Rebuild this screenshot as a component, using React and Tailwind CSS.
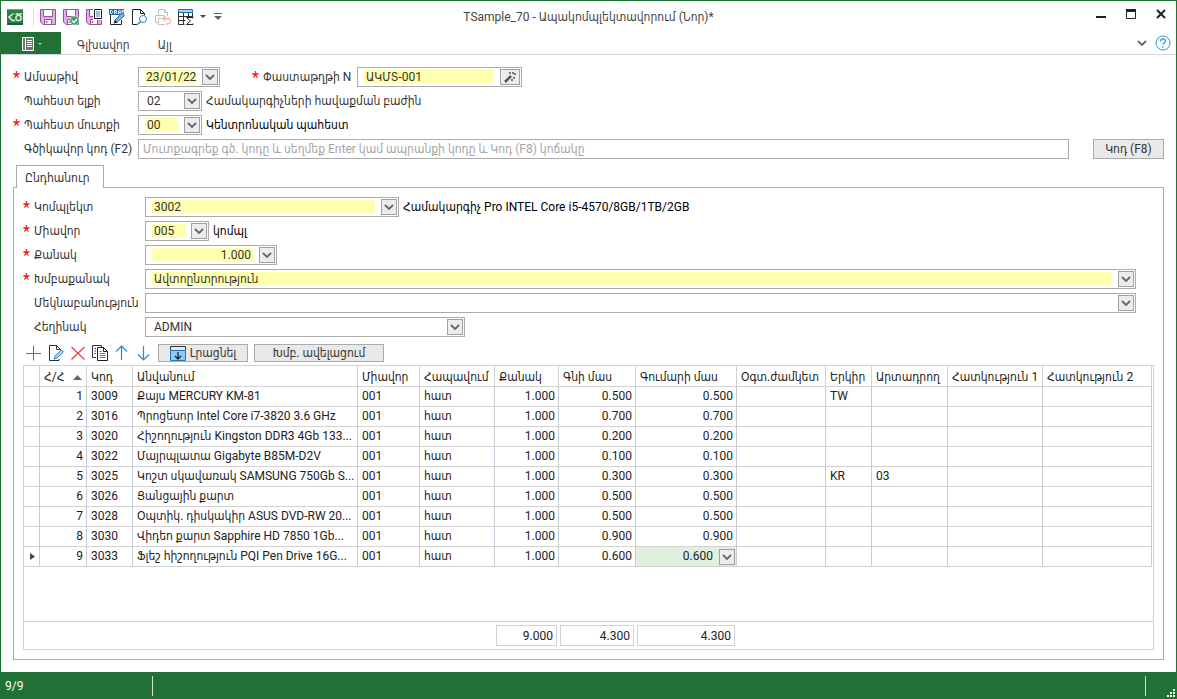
import React from 'react';

const columns = [
  { label: '', width: 'w-[16px]' },
  { label: 'Հ/Հ', width: 'w-[47px]', right: true, sorted: true },
  { label: 'Կոդ', width: 'w-[46px]' },
  { label: 'Անվանում', width: 'w-[225px]' },
  { label: 'Միավոր', width: 'w-[62px]' },
  { label: 'Հապավում', width: 'w-[75px]' },
  { label: 'Քանակ', width: 'w-[64px]', right: true, total: '9.000' },
  { label: 'Գնի մաս', width: 'w-[77px]', right: true, total: '4.300' },
  { label: 'Գումարի մաս', width: 'w-[101px]', right: true, total: '4.300' },
  { label: 'Օգտ.ժամկետ', width: 'w-[89px]' },
  { label: 'Երկիր', width: 'w-[46px]' },
  { label: 'Արտադրող', width: 'w-[76px]' },
  { label: 'Հատկություն 1', width: 'w-[95px]' },
  { label: 'Հատկություն 2', width: 'w-auto' },
];

const items = [
  ['3009', 'Քայս MERCURY KM-81', '0.500', 'TW', ''],
  ['3016', 'Պրոցեսոր Intel Core i7-3820 3.6 GHz', '0.700', '', ''],
  ['3020', 'Հիշողություն Kingston DDR3 4Gb 133...', '0.200', '', ''],
  ['3022', 'Մայրպլատա Gigabyte B85M-D2V', '0.100', '', ''],
  ['3025', 'Կոշտ սկավառակ SAMSUNG 750Gb S...', '0.300', 'KR', '03'],
  ['3026', 'Ցանցային քարտ', '0.500', '', ''],
  ['3028', 'Օպտիկ. դիսկակիր ASUS DVD-RW 20...', '0.500', '', ''],
  ['3030', 'Վիդեո քարտ Sapphire HD 7850 1Gb...', '0.900', '', ''],
  ['3033', 'Ֆլեշ հիշողություն PQI Pen Drive 16G...', '0.600', '', ''],
];

const rows = items.map(([code, name, part, country, maker], i) => [
  '', i + 1, code, name, '001', 'հատ', '1.000', part, part, '', country, maker, '', '',
]);

const Chevron = () => (
  <svg width="10" height="8" viewBox="0 0 10 8" fill="none" stroke="#666" strokeWidth="1.8">
    <path d="M1 2l4 4 4-4" />
  </svg>
);

const ArrowBox = () => (
  <span className="pointer-events-none flex h-4 w-4 shrink-0 items-center justify-center border border-[#a0a0a0] bg-[#ececec]">
    <Chevron />
  </span>
);

const Label = ({ htmlFor, required, className, children }) => (
  <label htmlFor={htmlFor} className={`flex shrink-0 items-center whitespace-nowrap ${className}`}>
    <span className="w-[11px] shrink-0 pt-0.5 text-base leading-4 text-[#ff0000]">{required ? '*' : ''}</span>
    {children}
  </label>
);

const boxClass = 'flex h-5 items-center gap-1.5 border border-[#ababab] bg-white pl-1.5 pr-px';

const Combo = ({ id, value, required, className }) => (
  <div className={`${boxClass} ${className}`}>
    <select
      id={id}
      defaultValue={value}
      className={`h-3.5 min-w-0 flex-1 appearance-none pl-0.5 leading-[14px] outline-none ${required ? 'bg-[#ffffb0]' : ''}`}
    >
      <option>{value}</option>
    </select>
    <ArrowBox />
  </div>
);

const Edit = ({ id, value, className, inputClass, children }) => (
  <div className={`${boxClass} ${className}`}>
    <input
      id={id}
      defaultValue={value}
      className={`h-3.5 min-w-0 flex-1 bg-[#ffffb0] outline-none ${inputClass}`}
    />
    {children}
  </div>
);

const PickButton = ({ label }) => (
  <button aria-label={label} className="flex h-4 w-4 shrink-0 items-center justify-center border border-[#a0a0a0] bg-[#ececec]">
    <Chevron />
  </button>
);

const Floppy = () => (
  <g fill="#dfb0df" stroke="#97509a">
    <path d="M.5.5h15v15H3L.5 13z" />
    <path d="M3.5.5h9v7h-9z" fill="#fff" />
    <path d="M4.5 10.5h7v5h-7z" fill="#fff" />
    <path d="M6.5 12v2" strokeWidth="1.5" />
  </g>
);

const Icon = ({ children }) => (
  <svg width="16" height="16" viewBox="0 0 16 16" fill="none">
    {children}
  </svg>
);

const quickActions = [
  { label: 'Գրանցել', icon: <Floppy /> },
  {
    label: 'Գրանցել և հաստատել',
    icon: (
      <>
        <Floppy />
        <circle cx="11.5" cy="11.5" r="4.7" fill="#3fa765" stroke="#fff" strokeWidth=".6" />
        <path d="M9 11.5l2 2 3-3.5" stroke="#fff" strokeWidth="1.3" />
      </>
    ),
  },
  {
    label: 'Գրանցել և փակել',
    icon: (
      <>
        <Floppy />
        <path d="M7 0h9v11H7z" fill="#fff" />
        <path d="M8.5.5h7v9h-7z" stroke="#222" fill="#fff" />
        <path d="M10 3h4M10 5h4M10 7h4" stroke="#2b87d1" />
      </>
    ),
  },
  {
    label: 'Սևագիր',
    icon: (
      <>
        <path d="M1.5 6v9.5h11V11M13 6v2" stroke="#222" />
        <path d="M0 0h15v6H0z" fill="#2b6cab" />
        <path d="M1.5 1.5v3h1l1-1v-1l-1-1zM5.5 5V1.5h2V3h-2m1.2 0L8 5M9.5 5V2l.7-.6h1V5M9.5 3.5h2M13 5V1.5h2M13 3h2" stroke="#fff" strokeWidth=".8" />
        <path d="M5 14l1-3 7-7 2.500 2.500-7 6.500z" fill="#79b4e3" stroke="#2b6cab" />
        <path d="M5 14.500l3.500-1L6 11z" fill="#222" />
      </>
    ),
  },
  {
    label: 'Դիտել',
    icon: (
      <>
        <path d="M5 15.500H.5V.5h8l4 4v2M8.500.5v4h4" stroke="#222" />
        <circle cx="11" cy="10" r="3.500" stroke="#2b87d1" fill="#fff" />
        <path d="M8.500 12.500l-3 3" stroke="#2b87d1" strokeWidth="1.5" />
      </>
    ),
  },
  {
    label: 'Չեղարկել',
    icon: (
      <>
        <path d="M3.500 6V.5h6l3 3V7M9.500.5v3h3M.5 6.500h9M.5 6.500v7H3M3 9.500h4M3.500 10v5.500h6" stroke="#bdbdbd" />
        <path d="M10.500 7L8 9.500l2.500 2.500M8 9.500h4.500q3 0 3 2.700t-3 2.800H11" stroke="#efb4ae" strokeWidth="1.3" />
      </>
    ),
  },
  {
    label: 'Հաշվարկ',
    icon: (
      <>
        <path d="M.5.5h14v3H.5z" fill="#a9d4f5" stroke="#1f6cab" />
        <path d="M.5 3.500v12h6M.5 7.500h14M.5 11.500h7M5.500 4v11.500M10.500 4v3.500M14.500 4v4" stroke="#333" />
        <path d="M15 9.500v-1H8.500l4 3.500-4 3.500H15v-1" stroke="#222" fill="#fff" />
      </>
    ),
  },
];

const gridActions = [
  { label: 'Ավելացնել', icon: <path d="M7.5 .5v15M0 8.5h15" stroke="#1d9a4c" /> },
  {
    label: 'Խմբագրել',
    icon: (
      <>
        <path d="M11 14v1.500H1.500V.5h7l4 4v1M8.500.5v4h4" stroke="#333" />
        <path d="M6 14l1-3 6.500-6 2 2L9 13z" fill="#a9d4f5" stroke="#2b87d1" />
      </>
    ),
  },
  { label: 'Հեռացնել', icon: <path d="M1.500 2l13 12.500M14.500 2l-13 12.500" stroke="#e2453c" strokeWidth="1.3" /> },
  {
    label: 'Պատճենել',
    icon: (
      <>
        <path d="M4 12.500H.5V.5h9V2M2.500 3.500H4M2.500 6H4M2.500 8.500H4" stroke="#333" />
        <path d="M5.500 2.500h6l4 4v9h-10zM11.500 2.500v4h4" fill="#fff" stroke="#222" />
        <path d="M7.500 6.500h2M7.500 8.500h6M7.500 10.500h6M7.500 12.500h6" stroke="#2b87d1" />
      </>
    ),
  },
  { label: 'Վերև', icon: <path d="M7.5 15V1M2 6.500L7.5 1 13 6.500" stroke="#2b87d1" strokeWidth="1.2" /> },
  { label: 'Ներքև', icon: <path d="M7.5 1v14M2 9.500L7.5 15 13 9.500" stroke="#2b87d1" strokeWidth="1.2" /> },
];

const TitleBar = () => (
  <header className="grid h-[31px] grid-cols-[1fr_auto_1fr] items-center">
    <div className="flex items-center pl-1.5">
      <svg width="16" height="16" viewBox="0 0 16 16" fill="none">
        <rect width="16" height="16" rx="1" fill="#2c8045" />
        <path d="M0 .5h16" stroke="#62ad72" />
        <path d="M0 14h16v2H0z" fill="#1c6130" />
        <path d="M6.500 4.500L2 8l3.500 3.500H8" stroke="#e6f3e8" strokeWidth="1.5" />
        <circle cx="11.500" cy="9" r="2.600" stroke="#e6f3e8" strokeWidth="1.4" />
        <path d="M8.500 5H15" stroke="#e6f3e8" strokeWidth="1.4" />
      </svg>
      <span className="ml-2.5 mr-1.5 h-5 w-px bg-[#dcdcdc]" />
      <div className="flex gap-[7px]">
        {quickActions.map((action) => (
          <button key={action.label} aria-label={action.label}>
            <Icon>{action.icon}</Icon>
          </button>
        ))}
      </div>
      <svg className="ml-1.5" width="6" height="4" viewBox="0 0 6 4"><path d="M0 0h6L3 3z" fill="#444" /></svg>
      <svg className="ml-2" width="8" height="7" viewBox="0 0 8 7"><path d="M0 0h8v1H0zM0 3h8L4 7z" fill="#666" /></svg>
    </div>
    <h1 className="whitespace-nowrap text-[#444]">TSample_70 - Ապակոմպլեկտավորում (Նոր)*</h1>
    <div className="flex items-center justify-end gap-5 pb-1.5 pr-2.5">
      <button aria-label="Minimize">
        <svg width="10" height="12"><path d="M0 8h10v2H0z" fill="#222" /></svg>
      </button>
      <button aria-label="Maximize">
        <svg width="10" height="10" fill="none"><path d="M.5.5h9v9h-9z" stroke="#222" /><path d="M0 0h10v3H0z" fill="#222" /></svg>
      </button>
      <button aria-label="Close">
        <svg width="10" height="10"><path d="M1 1l8 8M9 1L1 9" stroke="#222" strokeWidth="2" /></svg>
      </button>
    </div>
  </header>
);

const Ribbon = () => (
  <nav className="flex h-[23px] items-center border-b border-[#d5d5d5] text-[#444]">
    <button aria-label="Ֆայլ" className="flex h-full w-[60px] items-center gap-1 bg-[#217137] pl-[21px] pt-0.5">
      <svg width="12" height="14" fill="none">
        <path d="M.5.5h11v13H.5z" fill="#737373" stroke="#fff" />
        <path d="M3.500 0v14M5 3.500h5M5 5.500h5M5 7.500h5M5 9.500h5" stroke="#fff" />
      </svg>
      <svg width="4" height="3"><path d="M0 0h4L2 2z" fill="#b5d3bc" /></svg>
    </button>
    <a href="#main" className="ml-4 pt-1">Գլխավոր</a>
    <a href="#other" className="ml-7 pt-1">Այլ</a>
    <button aria-label="Ծալել" className="ml-auto"><Chevron /></button>
    <button aria-label="Օգնություն" className="ml-2 mr-[5px]">
      <svg width="16" height="16" viewBox="0 0 16 16" fill="none" stroke="#2b97d8">
        <circle cx="8" cy="8" r="7" />
        <path d="M5.500 6.500q0-2.700 2.500-2.700t2.500 2.200q0 1.300-1.300 2T8 9.800M8 11v1.500" strokeWidth="1.2" />
      </svg>
    </button>
  </nav>
);

const Cols = () => (
  <colgroup>
    {columns.map((col, i) => <col key={i} className={col.width} />)}
  </colgroup>
);

const ItemsGrid = () => (
  <div className="mx-[9px] mb-[9px] mt-[3px] flex flex-1 flex-col border border-[#d2d2d2] text-[#222]">
    <div className="pr-px">
      <table className="w-full table-fixed border-separate border-spacing-0">
        <Cols />
        <thead>
          <tr>
            {columns.map((col, i) => (
              <th key={i} className="h-[21px] whitespace-nowrap border-b border-r border-[#d2d2d2] p-0 pl-1 pt-0.5 text-left font-normal">
                {col.sorted ? (
                  <span className="flex items-center justify-between pr-1">
                    {col.label}
                    <svg width="9" height="5"><path d="M0 5h9L4.500 0z" fill="#666" /></svg>
                  </span>
                ) : col.label}
              </th>
            ))}
          </tr>
        </thead>
        <tbody>
          {rows.map((row, r) => {
            const current = r === rows.length - 1;
            return (
              <tr key={r}>
                {row.map((cell, c) => (
                  <td
                    key={c}
                    className={`h-5 whitespace-nowrap border-b border-r border-b-[#d2d2d2] border-r-[#c3ccd8] py-0 pl-1 leading-[19px] ${
                      columns[c].right ? 'text-right' : ''
                    } ${current && c === 8 ? 'bg-[#dff0e0] pr-px' : columns[c].right ? 'pr-[3px]' : 'pr-0'}`}
                  >
                    {current && c === 0 && (
                      <svg className="ml-0.5" width="5" height="7"><path d="M0 0v7l5-3.500z" fill="#444" /></svg>
                    )}
                    {current && c === 8 ? (
                      <span className="flex items-center justify-end gap-1.5">
                        {cell}
                        <PickButton label="Ընտրել գումարի մասը" />
                      </span>
                    ) : cell}
                  </td>
                ))}
              </tr>
            );
          })}
        </tbody>
      </table>
    </div>
    <div className="mt-auto border-t border-[#d2d2d2] py-[3px] pr-px">
      <table className="w-full table-fixed">
        <Cols />
        <tbody>
          <tr>
            {columns.map((col, i) => (
              <td key={i} className="h-[21px] p-0 pl-px pr-0.5 text-right">
                {col.total && <div className="h-[21px] border border-[#d2d2d2] pr-[3px] leading-[21px]">{col.total}</div>}
              </td>
            ))}
          </tr>
        </tbody>
      </table>
    </div>
  </div>
);

const App = () => {
  return (
    <div className="flex min-h-screen flex-col border-x border-t border-[#217137] bg-white font-['Roboto','DejaVu_Sans_Condensed',sans-serif] text-[12px] leading-4 text-[#333]">
      <TitleBar />
      <Ribbon />

      <main className="flex flex-1 flex-col px-3 pb-3 pt-3">
        <div className="flex flex-col gap-1">
          <div className="flex h-5 items-center">
            <Label htmlFor="date" required className="w-[125px]">Ամսաթիվ</Label>
            <Edit id="date" value="23/01/22" className="w-[82px]" inputClass="pl-px"><PickButton label="Ընտրել ամսաթիվ" /></Edit>
            <Label htmlFor="docnum" required className="ml-8 w-[105px]">Փաստաթղթի N</Label>
            <Edit id="docnum" value="ԱԿՄՏ-001" className="w-[165px]" inputClass="pl-0.5">
              <button aria-label="Գեներացնել" className="flex h-4 w-5 shrink-0 items-center justify-center border border-[#a0a0a0] bg-[#ececec]">
                <svg width="12" height="12" stroke="#555" fill="none">
                  <path d="M1 11l6-6" strokeWidth="2.5" />
                  <path d="M6 1v2M9 1v2M11 2v2M10 6v2M8 8v2" strokeWidth="1.5" />
                </svg>
              </button>
            </Edit>
          </div>
          <div className="flex h-5 items-center">
            <Label htmlFor="from" className="w-[125px]">Պահեստ ելքի</Label>
            <Combo id="from" value="02" className="w-16" />
            <span className="ml-1">Համակարգիչների հավաքման բաժին</span>
          </div>
          <div className="flex h-5 items-center">
            <Label htmlFor="to" required className="w-[125px]">Պահեստ մուտքի</Label>
            <Combo id="to" value="00" required className="w-16" />
            <span className="ml-1 text-black">Կենտրոնական պահեստ</span>
          </div>
          <div className="flex h-5 items-center">
            <Label htmlFor="barcode" className="w-[125px]">Գծիկավոր կոդ (F2)</Label>
            <input
              id="barcode"
              placeholder="Մուտքագրեք գծ. կոդը և սեղմեք Enter կամ ապրանքի կոդը և Կոդ (F8) կոճակը"
              className="h-5 min-w-0 flex-1 border border-[#ababab] px-1 outline-none placeholder:text-[#a5a5a5]"
            />
            <button className="ml-6 h-5 w-[71px] border border-[#ababab] bg-[#e9e9e9]">Կոդ (F8)</button>
          </div>
        </div>

        <div role="tablist" className="z-10 -mb-px ml-[3px] mt-1.5 flex">
          <button role="tab" aria-selected="true" className="h-[23px] w-[88px] border border-b-0 border-[#ababab] bg-white pl-2 pt-0.5 text-left">
            Ընդհանուր
          </button>
        </div>

        <section className="flex flex-1 flex-col border border-[#ababab]">
          <div className="flex flex-col gap-1 pl-[9px] pr-[27px] pt-[9px]">
            <div className="flex h-5 items-center">
              <Label htmlFor="kit" required className="w-[122px]">Կոմպլեկտ</Label>
              <Combo id="kit" value="3002" required className="w-[254px]" />
              <span className="ml-1 text-black">Համակարգիչ Pro INTEL Core i5-4570/8GB/1TB/2GB</span>
            </div>
            <div className="flex h-5 items-center">
              <Label htmlFor="unit" required className="w-[122px]">Միավոր</Label>
              <Combo id="unit" value="005" required className="w-16" />
              <span className="ml-1 text-black">կոմպլ</span>
            </div>
            <div className="flex h-5 items-center">
              <Label htmlFor="qty" required className="w-[122px]">Քանակ</Label>
              <Edit id="qty" value="1.000" className="w-[132px]" inputClass="pr-0.5 text-right"><PickButton label="Հաշվիչ" /></Edit>
            </div>
            <div className="flex h-5 items-center">
              <Label htmlFor="batch" required className="w-[122px]">Խմբաքանակ</Label>
              <Combo id="batch" value="Ավտոընտրություն" required className="flex-1" />
            </div>
            <div className="flex h-5 items-center">
              <Label htmlFor="comment" className="w-[122px]">Մեկնաբանություն</Label>
              <Combo id="comment" value="" className="flex-1" />
            </div>
            <div className="flex h-5 items-center">
              <Label htmlFor="author" className="w-[122px]">Հեղինակ</Label>
              <Combo id="author" value="ADMIN" className="w-80" />
            </div>
          </div>

          <div className="mt-[7px] flex h-[18px] items-center pl-3">
            <div className="flex gap-1.5">
              {gridActions.map((action) => (
                <button key={action.label} aria-label={action.label}>
                  <Icon>{action.icon}</Icon>
                </button>
              ))}
            </div>
            <button className="ml-1.5 flex h-[18px] w-[90px] items-center justify-center gap-1 border border-[#ababab] bg-[#e9e9e9]">
              <Icon>
                <path d="M.5 5V1.500h15V5" stroke="#333" />
                <path d="M.5 5.500h15v10H.5z" fill="#8ccbf6" stroke="#1f77c0" />
                <path d="M8 7v7M5 11l3 3 3-3" stroke="#222" strokeWidth="1.3" />
              </Icon>
              Լրացնել
            </button>
            <button className="ml-1.5 h-[18px] w-[130px] border border-[#ababab] bg-[#e9e9e9] leading-4">Խմբ. ավելացում</button>
          </div>

          <ItemsGrid />
        </section>
      </main>

      <footer className="flex h-[27px] items-center bg-[#217137] pl-1 text-white">
        <span className="w-[147px]">9/9</span>
        <span className="h-5 w-px bg-[#cfe2d3]" />
        <span className="ml-auto h-5 w-px bg-[#cfe2d3]" />
        <svg className="ml-[21px] mr-px self-end" width="8" height="10" fill="#fff">
          <path d="M6 0h2v2H6zM3 3h2v2H3zM6 3h2v2H6zM0 6h2v2H0zM3 6h2v2H3zM6 6h2v2H6z" />
        </svg>
      </footer>
    </div>
  );
};

export default App;
